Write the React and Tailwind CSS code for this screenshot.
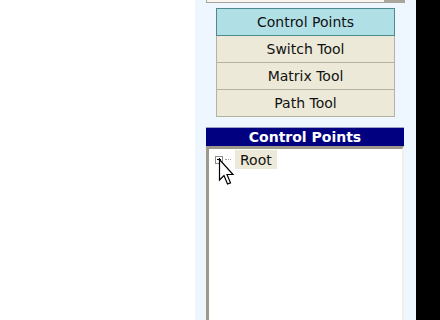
export default function App() {
  const tools = ['Switch Tool', 'Matrix Tool', 'Path Tool'];
  return (
    <div className="w-[440px] h-[320px] flex bg-white overflow-hidden" style={{ fontFamily: '"DejaVu Sans", Verdana, sans-serif' }}>
      <div className="w-[195px] shrink-0 bg-white" />
      <div className="w-[221px] shrink-0 bg-[#eef6ff] flex flex-col">
        {/* bottom of the panel above */}
        <div className="ml-[11px] w-[199px] h-[3px] flex border-l border-b border-[#a8a69a] bg-[#f7f5ee]">
          <div className="flex-1" />
          <div className="w-[21px] bg-[#a9a79b]" />
        </div>
        <div className="ml-[21px] mt-[5px] w-[179px] flex flex-col">
          <div className="h-[28px] flex items-center justify-center bg-[#b0e0e6] border border-[#4a8a90] text-[14px] leading-none text-[#111]">
            Control Points
          </div>
          {tools.map(t => (
            <div key={t} className="h-[27px] flex items-center justify-center bg-[#ece9d8] border border-t-0 border-[#b5b29f] text-[14px] leading-none text-[#111]">
              {t}
            </div>
          ))}
        </div>
        <div className="ml-[11px] mt-[10px] w-[198px] flex flex-col flex-1">
          <div className="h-[19px] bg-[#000080] border-t border-[#a0a0c8] flex items-center justify-center text-white text-[14px] leading-none font-bold">
            Control Points
          </div>
          <div className="flex-1 bg-white border-l-[3px] border-t-[3px] border-r-2 border-[#9d9a8c] border-r-[#f3f1e6] pl-[6px]">
            <div className="flex items-center h-[19px] mt-[1px]">
              <div className="w-[8px] h-[8px] border border-[#8c8c8c] bg-white flex items-center justify-center relative">
                <div className="absolute w-[4px] h-px bg-black" />
                <div className="absolute w-px h-[4px] bg-black" />
              </div>
              <div className="w-[6px] border-t border-dotted border-[#a0a0a0] ml-[2px]" />
              <div className="ml-[4px] px-[5px] h-[19px] bg-[#ece9d8] flex items-center text-[14px] leading-none text-[#111]">Root</div>
            </div>
          </div>
        </div>
      </div>
      <div className="flex-1 bg-black" />
      <svg className="absolute left-[218px] top-[158px]" width="17" height="28" viewBox="0 0 17 28">
        <path d="M1.5 1.5 L1.5 22 L6 17.5 L9.5 26 L12.5 24.8 L9 16.5 L15 16.5 Z" fill="white" stroke="black" strokeWidth="1.2" strokeLinejoin="miter" />
      </svg>
    </div>
  );
}
